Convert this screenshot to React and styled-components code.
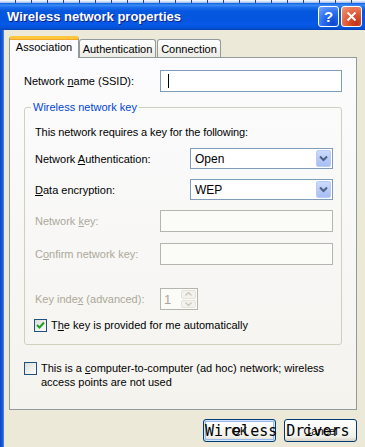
import React from 'react';
import styled, { createGlobalStyle } from 'styled-components';

const Global = createGlobalStyle`
  html, body { margin: 0; padding: 0; }
  body {
    width: 365px; height: 447px; overflow: hidden; background: #ECE9D8;
    font-family: "Liberation Sans", Arial, sans-serif; font-size: 11px; color: #000;
  }
`;

const Window = styled.div`
  width: 365px; height: 447px; display: flex; flex-direction: column; overflow: hidden;
`;

const BehindStrip = styled.div`
  height: 3px;
  background:
    repeating-linear-gradient(90deg, transparent 0 15px, #27468a 15px 16px),
    linear-gradient(#ffffff, #9fbbe9);
`;

const TitleBar = styled.div`
  height: 27px; display: flex; align-items: center; padding: 0 3px 0 7px;
  background: linear-gradient(to bottom, #0A5FE0 0%, #3D8BF5 8%, #1B6EEA 16%, #0657DE 30%, #0456E0 60%, #0659E8 80%, #0452D6 92%, #0443B8 100%);
`;

const Title = styled.div`
  flex: 1; color: #fff; font: bold 13px "Liberation Sans", Arial, sans-serif;
  text-shadow: 1px 1px 0 #0A1E8C;
`;

const CaptionButton = styled.div`
  width: 21px; height: 21px; box-sizing: border-box; border: 1px solid #fff; border-radius: 3px;
  display: flex; align-items: center; justify-content: center; margin-left: 2px;
  color: #fff; font: bold 15px "Liberation Sans", Arial, sans-serif;
  background: ${p => p.$close
    ? 'radial-gradient(circle at 75% 85%, #C2331A 0%, #E25A34 45%, #F19C80 100%)'
    : 'radial-gradient(circle at 75% 85%, #0C46D0 0%, #2A6EF2 50%, #7AAAFA 100%)'};
`;

const Body = styled.div`
  flex: 1; display: flex;
`;

const LeftFrame = styled.div`
  width: 4px; background: linear-gradient(90deg, #0A46C8, #1B60DA 70%, #6B93DE);
`;

const Content = styled.div`
  flex: 1; padding: 6px 0 0 5px; display: flex; flex-direction: column;
`;

const TabRow = styled.div`
  display: flex; align-items: flex-end; height: 21px; position: relative; z-index: 1;
`;

const Tab = styled.div`
  box-sizing: border-box; display: flex; align-items: center; justify-content: center;
  border: 1px solid #919B9C; border-bottom: none; border-radius: 3px 3px 0 0;
  ${p => p.$active ? `
    height: 22px; margin-bottom: -1px; width: 70px; padding-bottom: 3px;
    background: #FCFCFE;
    border-top: 3px solid #FFC83C;
    box-shadow: inset 0 1px 0 #F9A52A;
  ` : `
    height: 18px; background: linear-gradient(#FFFFFF, #ECEBE6);
    margin-left: ${p.$gap}px; width: ${p.$w}px;
  `}
`;

const Panel = styled.div`
  box-sizing: border-box; width: 348px; height: 353px;
  border: 1px solid #919B9C;
  background: linear-gradient(#FCFCFE, #F4F3EE);
  padding: 12px 13px 0 14px; display: flex; flex-direction: column;
`;

const Row = styled.div`
  display: flex; align-items: center; height: ${p => p.$h || 22}px;
  margin-top: ${p => p.$mt || 0}px;
`;

const Label = styled.div`
  width: ${p => p.$w}px; color: ${p => p.$disabled ? '#ACA899' : '#000'}; white-space: nowrap;
`;

const TextBox = styled.div`
  box-sizing: border-box; width: ${p => p.$w}px; height: ${p => p.$h || 22}px;
  border: 1px solid ${p => p.$disabled ? '#B5B5AE' : '#7F9DB9'};
  background: ${p => p.$disabled ? '#FBFBF8' : '#fff'};
  display: flex; align-items: center; padding-left: 7px;
`;

const Caret = styled.div`
  width: 1px; height: 14px; background: #000;
`;

const Group = styled.fieldset`
  margin: 9px 0 0 0; padding: 0; width: 318px; box-sizing: border-box;
  border: 1px solid #D0D0BF; border-radius: 3px;
`;

const Legend = styled.legend`
  margin-left: 6px; padding: 0 2px; color: #0046D5; line-height: 13px;
`;

const GroupInner = styled.div`
  padding: 12px 8px 12px 10px; display: flex; flex-direction: column;
`;

const Text = styled.div`
  line-height: 13px; letter-spacing: -0.1px;
`;

const Select = styled.div`
  box-sizing: border-box; width: 143px; height: 21px; border: 1px solid #7F9DB9; background: #fff;
  display: flex; align-items: center; padding: 1px;
`;

const SelectValue = styled.div`
  flex: 1; padding-left: 3px; font-size: 12px;
`;

const DropButton = styled.div`
  box-sizing: border-box; width: 15px; height: 17px; border: 1px solid #B9CDF5; border-radius: 2px;
  background: linear-gradient(#CCDBFC, #B4C8F6 60%, #A9BFF3);
  display: flex; align-items: center; justify-content: center;
`;

const Spin = styled.div`
  box-sizing: border-box; width: 38px; height: 22px; border: 1px solid #B5B5AE; background: #FBFBF8;
  display: flex; align-items: stretch; padding: 1px;
`;

const SpinValue = styled.div`
  flex: 1; color: #ACA899; font-size: 13px; display: flex; align-items: center; padding-left: 2px;
`;

const SpinButtons = styled.div`
  width: 15px; display: flex; flex-direction: column; gap: 1px;
`;

const SpinButton = styled.div`
  flex: 1; border: 1px solid #E4E3DC; border-radius: 2px; background: #F3F2EC;
  display: flex; align-items: center; justify-content: center;
`;

const CheckRow = styled.div`
  display: flex; align-items: ${p => p.$top ? 'flex-start' : 'center'}; gap: 4px;
  margin-top: ${p => p.$mt || 0}px; margin-left: ${p => p.$ml || 0}px;
`;

const Box = styled.div`
  box-sizing: border-box; width: 13px; height: 13px; flex: none;
  border: 1px solid #1C5180; background: linear-gradient(135deg, #DCDCD7, #FFFFFF);
  display: flex; align-items: center; justify-content: center;
  margin-top: ${p => p.$mt || 0}px;
`;

const CheckText = styled.div`
  line-height: ${p => p.$lh || 13}px;
`;

const ButtonRow = styled.div`
  position: relative; display: flex; justify-content: flex-end; gap: 8px;
  margin-top: 9px; padding-right: 8px;
`;

const Button = styled.div`
  box-sizing: border-box; width: 73px; height: 23px; border: 1px solid #003C74; border-radius: 3px;
  background: linear-gradient(#FFFFFF, #F0F0EA 80%, #D6D0C5);
  display: flex; align-items: center; justify-content: center;
  ${p => p.$default ? 'box-shadow: inset 0 0 0 1px #CEE7FF, inset 0 0 0 2px #98B8EA;' : ''}
`;

const Watermark = styled.div`
  position: absolute; left: 196px; top: 0; height: 23px; display: flex; align-items: center;
  font: 15px "DejaVu Sans Mono", "Liberation Mono", monospace; color: #000;
  white-space: pre; pointer-events: none;
`;

const Chevron = () => (
  <svg width="9" height="7" viewBox="0 0 9 7">
    <path d="M1 1.5 L4.5 5 L8 1.5" fill="none" stroke="#4D6185" strokeWidth="2" />
  </svg>
);

const Arrow = ({ up }) => (
  <svg width="7" height="4" viewBox="0 0 7 4">
    <path d={up ? 'M0.5 3.5 L3.5 0.5 L6.5 3.5' : 'M0.5 0.5 L3.5 3.5 L6.5 0.5'} fill="none" stroke="#C9C7BA" strokeWidth="1.4" />
  </svg>
);

const Check = () => (
  <svg width="9" height="9" viewBox="0 0 9 9">
    <path d="M1 4 L3.5 6.5 L8 1.5" fill="none" stroke="#21A121" strokeWidth="2" />
  </svg>
);

const CloseX = () => (
  <svg width="11" height="11" viewBox="0 0 11 11">
    <path d="M1.5 1.5 L9.5 9.5 M9.5 1.5 L1.5 9.5" stroke="#fff" strokeWidth="2" />
  </svg>
);

export default function App() {
  return (
    <Window>
      <Global />
      <BehindStrip />
      <TitleBar>
        <Title>Wireless network properties</Title>
        <CaptionButton>?</CaptionButton>
        <CaptionButton $close><CloseX /></CaptionButton>
      </TitleBar>
      <Body>
        <LeftFrame />
        <Content>
          <TabRow>
            <Tab $active>Association</Tab>
            <Tab $w={77} $gap={0}>Authentication</Tab>
            <Tab $w={64} $gap={1}>Connection</Tab>
          </TabRow>
          <Panel>
            <Row>
              <Label $w={136}>Network <u>n</u>ame (SSID):</Label>
              <TextBox $w={182}><Caret /></TextBox>
            </Row>
            <Group>
              <Legend>Wireless network key</Legend>
              <GroupInner>
                <Text>This network requires a key for the following:</Text>
                <Row $h={21} $mt={9}>
                  <Label $w={155}>Network <u>A</u>uthentication:</Label>
                  <Select><SelectValue>Open</SelectValue><DropButton><Chevron /></DropButton></Select>
                </Row>
                <Row $h={21} $mt={10}>
                  <Label $w={155}><u>D</u>ata encryption:</Label>
                  <Select><SelectValue>WEP</SelectValue><DropButton><Chevron /></DropButton></Select>
                </Row>
                <Row $mt={10}>
                  <Label $w={125} $disabled>Network <u>k</u>ey:</Label>
                  <TextBox $w={173} $disabled />
                </Row>
                <Row $mt={11}>
                  <Label $w={125} $disabled>C<u>o</u>nfirm network key:</Label>
                  <TextBox $w={173} $disabled />
                </Row>
                <Row $mt={23}>
                  <Label $w={125} $disabled>Key inde<u>x</u> (advanced):</Label>
                  <Spin>
                    <SpinValue>1</SpinValue>
                    <SpinButtons>
                      <SpinButton><Arrow up /></SpinButton>
                      <SpinButton><Arrow /></SpinButton>
                    </SpinButtons>
                  </Spin>
                </Row>
                <CheckRow $mt={9} $ml={-1}>
                  <Box><Check /></Box>
                  <CheckText>T<u>h</u>e key is provided for me automatically</CheckText>
                </CheckRow>
              </GroupInner>
            </Group>
            <CheckRow $top $mt={16}>
              <Box $mt={1} />
              <CheckText $lh={14}>
                This is a <u>c</u>omputer-to-computer (ad hoc) network; wireless<br />
                access points are not used
              </CheckText>
            </CheckRow>
          </Panel>
          <ButtonRow>
            <Button $default>OK</Button>
            <Button>Cancel</Button>
            <Watermark>Wireless Drivers</Watermark>
          </ButtonRow>
        </Content>
      </Body>
    </Window>
  );
}
